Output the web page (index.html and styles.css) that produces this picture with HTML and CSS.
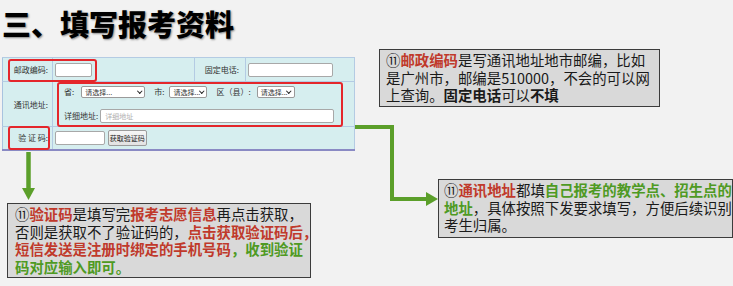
FILE: index.html
```html
<!DOCTYPE html>
<html lang="zh-CN">
<head>
    <meta charset="UTF-8">
    <meta name="viewport" content="width=device-width, initial-scale=1.0">
    <title>填写报考资料</title>
    <link rel="stylesheet" href="styles.css">
</head>
<body>
    <div class="slide">
        <h1 class="title">三、填写报考资料</h1>

        <!-- Registration form screenshot -->
        <div class="form-wrap">
            <table class="reg-form">
                <tr class="row-zip">
                    <td class="label">邮政编码:</td>
                    <td class="field"><span class="input input-zip"></span></td>
                    <td class="label">固定电话:</td>
                    <td class="field"><span class="input input-phone"></span></td>
                </tr>
                <tr class="row-addr">
                    <td class="label">通讯地址:</td>
                    <td class="field" colspan="3">
                        <div class="addr-line">
                            <span class="txt">省:</span>
                            <span class="select select-prov">请选择...<i class="chev"></i></span>
                            <span class="txt">市:</span>
                            <span class="select select-small">请选择...<i class="chev"></i></span>
                            <span class="txt">区（县）:</span>
                            <span class="select select-small">请选择...<i class="chev"></i></span>
                        </div>
                        <div class="addr-line">
                            <span class="txt">详细地址:</span>
                            <span class="input input-addr">详细地址</span>
                        </div>
                    </td>
                </tr>
                <tr class="row-code">
                    <td class="label">验 证 码:</td>
                    <td class="field" colspan="3">
                        <span class="input input-code"></span>
                        <span class="btn-code">获取验证码</span>
                    </td>
                </tr>
            </table>
            <span class="mark mark-zip"></span>
            <span class="mark mark-addr"></span>
            <span class="mark mark-code"></span>
        </div>

        <!-- Connectors -->
        <svg class="arrows" width="733" height="286" viewBox="0 0 733 286">
            <line x1="28.5" y1="152" x2="28.5" y2="190" stroke="#5b9f2a" stroke-width="4.5"/>
            <polygon points="22,188 35,188 28.5,200" fill="#5b9f2a"/>
            <polyline points="355,127 392,127 392,199 428,199" fill="none" stroke="#5b9f2a" stroke-width="4"/>
            <polygon points="426,192 438,199 426,206" fill="#5b9f2a"/>
        </svg>

        <!-- Notes -->
        <div class="note note-zip">
            ⑪<b class="red">邮政编码</b>是写通讯地址地市邮编，比如<br>
            是广州市，邮编是510000，不会的可以网<br>
            上查询。<b>固定电话</b>可以<b>不填</b>
        </div>

        <div class="note note-code">
            ⑪<b class="red">验证码</b>是填写完<b class="red">报考志愿信息</b>再点击获取，<br>
            否则是获取不了验证码的，<b class="red">点击获取验证码后，</b><br>
            <b class="red">短信发送是注册时绑定的手机号码</b><b class="green">，收到验证</b><br>
            <b class="green">码对应输入即可。</b>
        </div>

        <div class="note note-addr">
            ⑪<b class="red">通讯地址</b>都填<b class="green">自己报考的教学点、招生点的</b><br>
            <b class="green">地址</b>，具体按照下发要求填写，方便后续识别<br>
            考生归属。
        </div>
    </div>
</body>
</html>
```

FILE: styles.css
```css
* {
    margin: 0;
    padding: 0;
    box-sizing: border-box;
}

body {
    background: #f2f2f2;
    font-family: "Noto Sans CJK SC", "Noto Sans", sans-serif;
    color: #1a1a1a;
}

.slide {
    position: relative;
    width: 733px;
    height: 286px;
    overflow: hidden;
}

.title {
    height: 57px;
    padding: 9px 0 0 2px;
    font-size: 29px;
    line-height: 29px;
    font-weight: 900;
    color: #000;
    text-shadow: 1px 1px 2px rgba(0, 0, 0, 0.45);
}

/* form */
.form-wrap {
    position: relative;
    margin-left: 2px;
    width: 353px;
}

.reg-form {
    width: 353px;
    border-collapse: collapse;
    background: #d6eeef;
    font-size: 8px;
    color: #333;
    border-top: 1px solid #a9c3df;
    border-left: 1px solid #a9c3df;
    border-bottom: 2px solid #8a8ac4;
}

.reg-form td {
    border-top: 1px solid #b4cbe3;
    border-right: 1px solid #b4cbe3;
    vertical-align: middle;
    white-space: nowrap;
}

.reg-form td.label {
    text-align: right;
    padding-right: 4px;
    width: 50px;
}

.row-zip td.label:nth-child(3) {
    width: 51px;
    padding-right: 6px;
}

.row-zip {
    height: 24px;
}

.row-addr {
    height: 45px;
}

.row-code {
    height: 23px;
}

.reg-form td.field {
    padding-left: 2px;
}

.row-zip td.field:nth-child(2) {
    width: 142px;
}

.input {
    display: inline-block;
    height: 14px;
    background: #fff;
    border: 1px solid #a8a8a8;
    border-radius: 2px;
    vertical-align: middle;
    color: #b0b0b0;
    font-size: 7px;
    line-height: 12px;
    padding-left: 4px;
}

.input-zip {
    width: 37px;
}

.input-phone {
    width: 85px;
}

.input-code {
    width: 50px;
}

.input-addr {
    width: 234px;
    margin-left: 2px;
}

.row-addr td.field {
    padding-left: 11px;
}

.addr-line {
    display: flex;
    align-items: center;
}

.addr-line + .addr-line {
    margin-top: 11px;
}

.addr-line .txt {
    color: #333;
}

.select {
    position: relative;
    display: inline-block;
    height: 12px;
    background: #fff;
    border: 1px solid #9a9a9a;
    border-radius: 2px;
    font-size: 7px;
    line-height: 10px;
    padding-left: 3px;
    color: #333;
}

.select-prov {
    width: 64px;
    margin: 0 9px 0 7px;
}

.select-small {
    width: 38px;
    margin: 0 9px 0 5px;
}

.select-small:last-child {
    margin: 0 0 0 6px;
}

.chev {
    position: absolute;
    right: 3px;
    top: 2px;
    width: 3.5px;
    height: 3.5px;
    border-right: 1.4px solid #222;
    border-bottom: 1.4px solid #222;
    transform: rotate(45deg);
}

.btn-code {
    display: inline-block;
    width: 39px;
    height: 16px;
    margin-left: 1px;
    vertical-align: middle;
    background: linear-gradient(#f6f6f6, #e2e2e2);
    border: 1px solid #9c9c9c;
    border-radius: 2px;
    text-align: center;
    font-size: 7px;
    line-height: 14px;
    color: #222;
}

/* red highlight boxes */
.mark {
    position: absolute;
    border: 2px solid #e4262b;
    border-radius: 3px;
}

.mark-zip {
    left: 6px;
    top: 2px;
    width: 89px;
    height: 23px;
}

.mark-addr {
    left: 55px;
    top: 25px;
    width: 286px;
    height: 45px;
}

.mark-code {
    left: 6px;
    top: 69px;
    width: 42px;
    height: 24px;
}

.arrows {
    position: absolute;
    left: 0;
    top: 0;
    pointer-events: none;
}

/* notes */
.note {
    position: absolute;
    background: #d9d9d9;
    border: 1.5px solid #3c3c3c;
    font-size: 14.4px;
    line-height: 17.5px;
    white-space: nowrap;
    padding: 1px 0 0 6px;
    color: #1a1a1a;
}

.note b {
    font-weight: 700;
}

.red {
    color: #c0392b;
}

.green {
    color: #4e9a23;
}

.note-zip {
    left: 379px;
    top: 49px;
    width: 281px;
    height: 58px;
}

.note-code {
    left: 7px;
    top: 203px;
    width: 304px;
    height: 75px;
    padding-left: 7px;
}

.note-addr {
    left: 438px;
    top: 179px;
    width: 295px;
    height: 59px;
    padding-left: 5px;
}
```
